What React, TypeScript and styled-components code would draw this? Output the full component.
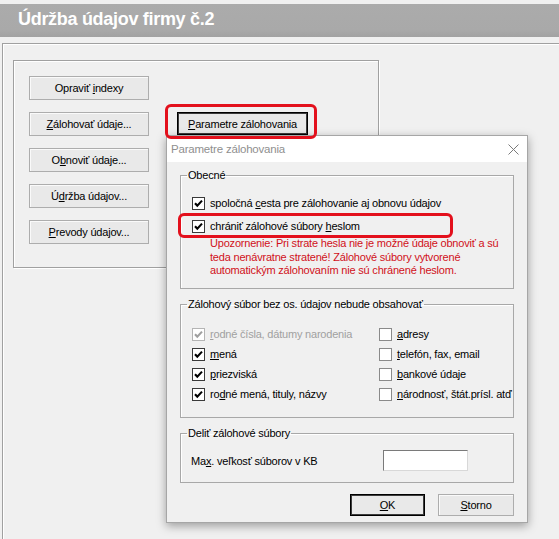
import React from "react";
import styled, { createGlobalStyle } from "styled-components";

const GlobalStyle = createGlobalStyle`
  html, body { margin: 0; padding: 0; background: #f0f0f0; }
  body { font-family: "Liberation Sans", Arial, sans-serif; font-size: 11px; letter-spacing: -0.2px; color: #000; }
  * { box-sizing: border-box; }
`;

const Screen = styled.div`
  position: relative;
  width: 559px;
  height: 539px;
  overflow: hidden;
  background: #f0f0f0;
  display: flex;
  flex-direction: column;
  padding-top: 4px;
`;

const AppTitle = styled.div`
  height: 33px;
  background: linear-gradient(#ababab 0, #a9a9a9 80%, #a2a2a2 100%);
  display: flex;
  align-items: center;
  padding-left: 18px;
  padding-bottom: 2px;
  color: #fff;
  font-family: "Liberation Sans", Arial, sans-serif;
  font-weight: bold;
  font-size: 18px;
  letter-spacing: -0.3px;
`;

const MainPanel = styled.div`
  flex: 1;
  margin: 6px 0 0 2px;
  border-top: 1px solid #a0a0a0;
  border-left: 1px solid #a0a0a0;
  box-shadow: inset 1px 1px 0 #fff;
  padding: 16px 0 0 10px;
`;

const ToolGroup = styled.div`
  width: 366px;
  height: 208px;
  border: 1px solid #a0a0a0;
  box-shadow: inset 1px 1px 0 #fff, 1px 1px 0 #fff;
  display: grid;
  grid-template-columns: 120px 131px;
  grid-auto-rows: 24px;
  column-gap: 28px;
  row-gap: 12px;
  align-content: start;
  padding: 15px 0 0 15px;
`;

const Button = styled.button<{ $default?: boolean; $w?: number; $h?: number }>`
  width: ${(p) => (p.$w ? `${p.$w}px` : "100%")};
  height: ${(p) => (p.$h ? `${p.$h}px` : "24px")};
  margin: 0;
  padding: 0;
  background: #e9e9e9;
  border: 1px solid ${(p) => (p.$default ? "#000" : "#adadad")};
  box-shadow: ${(p) => (p.$default ? "inset 0 0 0 1px #3c3c3c" : "inset 1px 1px 0 #fafafa")};
  font-family: "Liberation Sans", Arial, sans-serif;
  font-size: 11px;
  letter-spacing: -0.2px;
  color: #000;
  display: flex;
  align-items: center;
  justify-content: center;
  cursor: default;
`;

const Mn = styled.span`
  text-decoration: underline;
  text-underline-offset: 1px;
`;

const Dialog = styled.div`
  position: absolute;
  left: 166px;
  top: 135px;
  width: 362px;
  height: 388px;
  background: #f0f0f0;
  border: 1px solid #a6a6a6;
  box-shadow: 0 3px 9px rgba(0, 0, 0, 0.35);
  display: flex;
  flex-direction: column;
`;

const DialogTitle = styled.div`
  height: 26px;
  background: #fff;
  display: flex;
  align-items: center;
  justify-content: space-between;
  padding: 0 8px 0 4px;
  color: #8f8f8f;
  font-size: 11.5px;
`;

const DialogBody = styled.div`
  flex: 1;
  display: flex;
  flex-direction: column;
  gap: 9px;
  padding: 7px 13px 0 13px;
`;

const Group = styled.fieldset<{ $h: number }>`
  margin: 0;
  min-width: 0;
  height: ${(p) => p.$h}px;
  border: 1px solid #a8a8a8;
  box-shadow: inset 1px 1px 0 #fff;
  padding: 0;
`;

const Legend = styled.legend`
  margin-left: 6px;
  padding: 0 1px;
  font-size: 11px;
  line-height: 13px;
`;

const GroupContent = styled.div<{ $pt: number; $pl: number }>`
  padding: ${(p) => p.$pt}px 0 0 ${(p) => p.$pl}px;
  display: flex;
  flex-direction: column;
`;

const CheckRow = styled.label<{ $disabled?: boolean }>`
  display: flex;
  align-items: center;
  height: 16px;
  gap: 5px;
  color: ${(p) => (p.$disabled ? "#a0a0a0" : "#000")};
  white-space: nowrap;
`;

const Box = styled.span<{ $disabled?: boolean; $checked?: boolean }>`
  width: 13px;
  height: 13px;
  flex: none;
  background: #fff;
  border: 1px solid ${(p) => (p.$disabled ? "#b4b4b4" : p.$checked ? "#3a3a3a" : "#8a8a8a")};
  display: flex;
  align-items: center;
  justify-content: center;
`;

const Rows = styled.div<{ $gap: number }>`
  display: flex;
  flex-direction: column;
  gap: ${(p) => p.$gap}px;
`;

const Warning = styled.div`
  margin: 3px 0 0 18px;
  color: #d0101a;
  line-height: 13.5px;
`;

const Columns = styled.div`
  display: grid;
  grid-template-columns: 187px 1fr;
`;

const SizeRow = styled.div`
  display: grid;
  grid-template-columns: 192px 85px;
  align-items: center;
`;

const TextInput = styled.div`
  height: 21px;
  background: #fff;
  border: 1px solid #7a7a7a;
  border-right-color: #d8d8d8;
  border-bottom-color: #d8d8d8;
`;

const ButtonRow = styled.div`
  display: flex;
  justify-content: flex-end;
  gap: 13px;
  margin-top: 2px;
`;

const Highlight = styled.div<{ $x: number; $y: number; $w: number; $h: number }>`
  position: absolute;
  left: ${(p) => p.$x}px;
  top: ${(p) => p.$y}px;
  width: ${(p) => p.$w}px;
  height: ${(p) => p.$h}px;
  border: 3px solid #e3101c;
  border-radius: 6px;
  pointer-events: none;
`;

const Check: React.FC<{ checked?: boolean; disabled?: boolean }> = ({ checked, disabled }) => (
  <Box $checked={checked} $disabled={disabled}>
    {checked && (
      <svg width="9" height="9" viewBox="0 0 9 9">
        <polyline
          points="1,4.2 3.3,6.6 8,1.6"
          fill="none"
          stroke={disabled ? "#a0a0a0" : "#000"}
          strokeWidth="2.1"
        />
      </svg>
    )}
  </Box>
);

const CloseIcon = () => (
  <svg width="11" height="11" viewBox="0 0 11 11">
    <path d="M0.5 0.5 L10.5 10.5 M10.5 0.5 L0.5 10.5" stroke="#7a7a7a" strokeWidth="1" />
  </svg>
);

export default function App() {
  return (
    <>
      <GlobalStyle />
      <Screen>
        <AppTitle>Údržba údajov firmy č.2</AppTitle>
        <MainPanel>
          <ToolGroup>
            <Button>
              Opraviť&nbsp;<Mn>i</Mn>ndexy
            </Button>
            <span />
            <Button>
              <Mn>Z</Mn>álohovať údaje...
            </Button>
            <Button $default $h={23}>
              <Mn>P</Mn>arametre zálohovania
            </Button>
            <Button>
              O<Mn>b</Mn>noviť údaje...
            </Button>
            <span />
            <Button>
              Ú<Mn>d</Mn>ržba údajov...
            </Button>
            <span />
            <Button>
              <Mn>P</Mn>revody údajov...
            </Button>
          </ToolGroup>
        </MainPanel>

        <Dialog>
          <DialogTitle>
            <span>Parametre zálohovania</span>
            <CloseIcon />
          </DialogTitle>
          <DialogBody>
            <Group $h={120}>
              <Legend>Obecné</Legend>
              <GroupContent $pt={13} $pl={11}>
                <Rows $gap={7}>
                  <CheckRow>
                    <Check checked />
                    <span>
                      spoločná <Mn>c</Mn>esta pre zálohovanie aj obnovu údajov
                    </span>
                  </CheckRow>
                  <CheckRow>
                    <Check checked />
                    <span>
                      chrániť zálohové súbory <Mn>h</Mn>eslom
                    </span>
                  </CheckRow>
                </Rows>
                <Warning>
                  Upozornenie: Pri strate hesla nie je možné údaje obnoviť a sú
                  <br />
                  teda nenávratne stratené! Zálohové súbory vytvorené
                  <br />
                  automatickým zálohovaním nie sú chránené heslom.
                </Warning>
              </GroupContent>
            </Group>

            <Group $h={120}>
              <Legend>Zálohový súbor bez os. údajov nebude obsahovať</Legend>
              <GroupContent $pt={15} $pl={11}>
                <Columns>
                  <Rows $gap={4}>
                    <CheckRow $disabled>
                      <Check checked disabled />
                      <span>
                        <Mn>r</Mn>odné čísla, dátumy narodenia
                      </span>
                    </CheckRow>
                    <CheckRow>
                      <Check checked />
                      <span>
                        <Mn>m</Mn>ená
                      </span>
                    </CheckRow>
                    <CheckRow>
                      <Check checked />
                      <span>
                        <Mn>p</Mn>riezviská
                      </span>
                    </CheckRow>
                    <CheckRow>
                      <Check checked />
                      <span>
                        ro<Mn>d</Mn>né mená, tituly, názvy
                      </span>
                    </CheckRow>
                  </Rows>
                  <Rows $gap={4}>
                    <CheckRow>
                      <Check />
                      <span>
                        <Mn>a</Mn>dresy
                      </span>
                    </CheckRow>
                    <CheckRow>
                      <Check />
                      <span>
                        <Mn>t</Mn>elefón, fax, email
                      </span>
                    </CheckRow>
                    <CheckRow>
                      <Check />
                      <span>
                        <Mn>b</Mn>ankové údaje
                      </span>
                    </CheckRow>
                    <CheckRow>
                      <Check />
                      <span>
                        <Mn>n</Mn>árodnosť, štát.prísl. atď
                      </span>
                    </CheckRow>
                  </Rows>
                </Columns>
              </GroupContent>
            </Group>

            <Group $h={56}>
              <Legend>Deliť zálohové súbory</Legend>
              <GroupContent $pt={10} $pl={10}>
                <SizeRow>
                  <span>
                    Ma<Mn>x</Mn>. veľkosť súborov v KB
                  </span>
                  <TextInput />
                </SizeRow>
              </GroupContent>
            </Group>

            <ButtonRow>
              <Button $default $w={75} $h={22}>
                <Mn>O</Mn>K
              </Button>
              <Button $w={76} $h={22}>
                <Mn>S</Mn>torno
              </Button>
            </ButtonRow>
          </DialogBody>
        </Dialog>

        <Highlight $x={165} $y={104} $w={152} $h={35} />
        <Highlight $x={178} $y={213} $w={275} $h={25} />
      </Screen>
    </>
  );
}
